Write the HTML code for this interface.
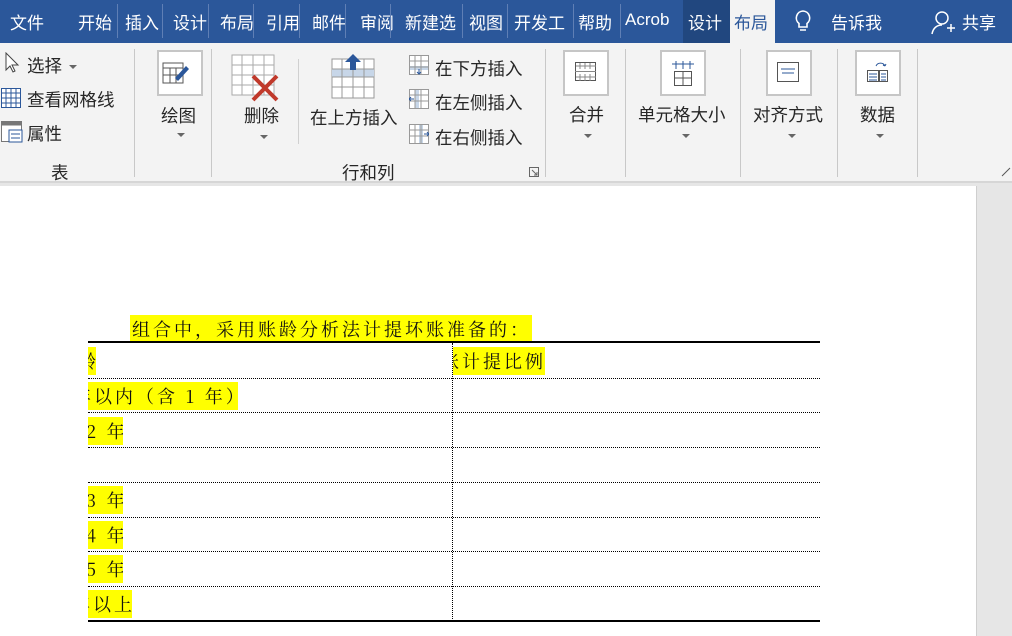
<!DOCTYPE html>
<html><head><meta charset="utf-8"><style>
*{margin:0;padding:0;box-sizing:border-box}
html,body{width:1012px;height:636px;overflow:hidden}
body{position:relative;background:#e6e6e6;font-family:"Liberation Sans","Noto Sans CJK SC",sans-serif}
.a{position:absolute;white-space:nowrap}
#tabs{position:absolute;left:0;top:0;width:1012px;height:43px;background:#2b579a}
.t{position:absolute;top:9px;color:#fff;font-size:17px;white-space:nowrap}
.sep{position:absolute;top:4px;width:1px;height:34px;background:#5f7fb5}
#rib{position:absolute;left:0;top:43px;width:1012px;height:140px;background:#f3f3f3;border-bottom:2px solid #d6d6d6}
.r{position:absolute;font-size:17.5px;color:#262626;white-space:nowrap}
.vs{position:absolute;top:6px;width:1px;height:128px;background:#c8c8c8}
.bx{position:absolute;top:7px;width:46px;height:46px;border:2px solid #c6c6c6;background:#fff}
.dd{position:absolute;width:0;height:0;border-left:4px solid transparent;border-right:4px solid transparent;border-top:4px solid #666}
#page{position:absolute;left:0;top:186px;width:977px;height:450px;background:#fff;border-right:1px solid #cfcfcf;overflow:hidden}
.doc{font-family:"Noto Serif CJK SC","Noto Sans CJK SC",serif;font-size:18px;color:#111}
.hl{background:#ffff00;position:absolute;height:28px;line-height:28px;letter-spacing:3px;white-space:nowrap;overflow:hidden}
.hd{position:absolute;left:88px;width:732px;border-top:1px dotted #000}
</style></head><body>
<div id="tabs">
<span class="t" style="left:10px">文件</span>
<span class="t" style="left:78px">开始</span><div class="sep" style="left:117px"></div>
<span class="t" style="left:125px">插入</span><div class="sep" style="left:162px"></div>
<span class="t" style="left:173px">设计</span><div class="sep" style="left:208px"></div>
<span class="t" style="left:220px">布局</span><div class="sep" style="left:253px"></div>
<span class="t" style="left:266px">引用</span><div class="sep" style="left:299px"></div>
<span class="t" style="left:312px">邮件</span><div class="sep" style="left:345px"></div>
<span class="t" style="left:360px">审阅</span><div class="sep" style="left:390px"></div>
<span class="t" style="left:405px">新建选</span><div class="sep" style="left:462px"></div>
<span class="t" style="left:469px">视图</span><div class="sep" style="left:507px"></div>
<span class="t" style="left:514px">开发工</span><div class="sep" style="left:573px"></div>
<span class="t" style="left:578px">帮助</span><div class="sep" style="left:620px"></div>
<span class="t" style="left:625px;top:10px">Acrob</span>
<div class="a" style="left:683px;top:0;width:47px;height:43px;background:#21477f"></div>
<span class="t" style="left:688px">设计</span>
<div class="a" style="left:730px;top:0;width:45px;height:44px;background:#f3f3f3"></div>
<span class="t" style="left:734px;color:#2b579a">布局</span>
<svg class="a" style="left:792px;top:9px" width="22" height="26"><path d="M11 2a7 7 0 0 0-4 12.5V18h8v-3.5A7 7 0 0 0 11 2z M8 21h6" stroke="#fff" stroke-width="1.6" fill="none"/></svg>
<span class="t" style="left:831px">告诉我</span>
<svg class="a" style="left:930px;top:10px" width="26" height="26"><circle cx="12" cy="8" r="6" stroke="#fff" stroke-width="1.5" fill="none"/><path d="M2 24c1-6 5-9 10-9M17 18h8M21 14v8" stroke="#fff" stroke-width="1.5" fill="none"/></svg>
<span class="t" style="left:962px">共享</span>
</div>
<div id="rib">
<svg class="a" style="left:5px;top:9px" width="16" height="22"><path d="M1 1v17l4-4 3 6 2-1-3-6h6z" fill="#fff" stroke="#444"/></svg>
<span class="r" style="left:27px;top:10px">选择</span><div class="dd" style="left:69px;top:22px"></div>
<svg class="a" style="left:1px;top:45px" width="20" height="20"><rect x="0.5" y="0.5" width="19" height="19" fill="#fff" stroke="#2b579a"/><path d="M5 1v19M10 1v19M15 1v19M1 5h19M1 10h19M1 15h19" stroke="#2b579a"/></svg>
<span class="r" style="left:27px;top:44px">查看网格线</span>
<svg class="a" style="left:1px;top:78px" width="22" height="22"><rect x="0.5" y="0.5" width="20" height="20" fill="#fff" stroke="#777"/><rect x="0.5" y="0.5" width="20" height="4" fill="#777"/><rect x="8" y="9" width="13" height="12" fill="#fff" stroke="#2b579a"/><path d="M10 13h9M10 17h9" stroke="#2b579a"/></svg>
<span class="r" style="left:27px;top:78px">属性</span>
<span class="r" style="left:51px;top:117px">表</span>
<div class="vs" style="left:134px"></div>
<div class="bx" style="left:157px"></div>
<svg class="a" style="left:161px;top:16px" width="40" height="34"><rect x="2" y="4" width="20" height="20" fill="#fff" stroke="#555"/><path d="M2 9h20M2 16h20M9 9v15M15 9v15" stroke="#555"/><path d="M14 19l11-12 3 3-11 12z" fill="#2b579a"/></svg>
<span class="r" style="left:161px;top:60px">绘图</span><div class="dd" style="left:177px;top:90px"></div>
<div class="vs" style="left:211px"></div>
<svg class="a" style="left:231px;top:11px" width="48" height="48"><rect x="1" y="1" width="42" height="40" fill="#fff" stroke="#aaa"/><path d="M11 1v40M22 1v40M33 1v40M1 11h42M1 21h42M1 31h42" stroke="#aaa"/><path d="M22 22l24 24M46 22L22 46" stroke="#c0392b" stroke-width="4"/></svg>
<span class="r" style="left:244px;top:60px">删除</span><div class="dd" style="left:260px;top:92px"></div>
<div class="a" style="left:298px;top:16px;width:1px;height:85px;background:#d0d0d0"></div>
<svg class="a" style="left:331px;top:11px" width="45" height="45"><rect x="1" y="5" width="42" height="39" fill="#fff" stroke="#999"/><rect x="1" y="15" width="42" height="8" fill="#c7d6e8"/><path d="M11 5v39M22 5v39M33 5v39M1 15h42M1 23h42M1 33h42" stroke="#999"/><path d="M22 0l-8 8h5v8h6V8h5z" fill="#2b579a"/></svg>
<span class="r" style="left:310px;top:62px">在上方插入</span>
<span class="r" style="left:435px;top:13px">在下方插入</span>
<span class="r" style="left:435px;top:47px">在左侧插入</span>
<span class="r" style="left:435px;top:82px">在右侧插入</span>
<svg class="a" style="left:409px;top:12px" width="20" height="20"><rect x="0.5" y="0.5" width="19" height="19" fill="#fff" stroke="#999"/><rect x="1" y="11" width="18" height="4" fill="#c7d6e8"/><path d="M6 1v19M12 1v19M1 6h19M1 12h19" stroke="#999"/><path d="M10 14v5M8 17l2 2 2-2" stroke="#2b579a" fill="none"/></svg>
<svg class="a" style="left:409px;top:46px" width="20" height="20"><rect x="0.5" y="0.5" width="19" height="19" fill="#fff" stroke="#999"/><rect x="6" y="1" width="4" height="18" fill="#c7d6e8"/><path d="M6 1v19M12 1v19M1 6h19M1 12h19" stroke="#999"/><path d="M5 10H0M2 8l-2 2 2 2" stroke="#2b579a" fill="none"/></svg>
<svg class="a" style="left:409px;top:81px" width="20" height="20"><rect x="0.5" y="0.5" width="19" height="19" fill="#fff" stroke="#999"/><rect x="10" y="1" width="4" height="18" fill="#c7d6e8"/><path d="M6 1v19M12 1v19M1 6h19M1 12h19" stroke="#999"/><path d="M15 10h5M18 8l2 2-2 2" stroke="#2b579a" fill="none"/></svg>
<span class="r" style="left:342px;top:117px">行和列</span>
<svg class="a" style="left:529px;top:124px" width="10" height="10"><path d="M0.5 0.5h9v9h-9z M3 3l5 5M8 5v3H5" stroke="#666" fill="none"/></svg>
<div class="vs" style="left:545px"></div>
<div class="bx" style="left:563px"></div>
<svg class="a" style="left:575px;top:19px" width="22" height="20"><rect x="0.5" y="0.5" width="20" height="18" fill="none" stroke="#555"/><path d="M0 9.5h21M5 1v6M10 1v6M15 1v6M5 12v7M10 12v7M15 12v7M1 4h20M1 15h20" stroke="#888"/></svg>
<span class="r" style="left:569px;top:59px">合并</span><div class="dd" style="left:584px;top:91px"></div>
<div class="vs" style="left:625px"></div>
<div class="bx" style="left:660px"></div>
<svg class="a" style="left:671px;top:18px" width="24" height="26"><path d="M1 3h22M5 0v8M12 0v8M19 0v8" stroke="#2b579a"/><rect x="3.5" y="10.5" width="17" height="14" fill="none" stroke="#555"/><path d="M12 11v13M3 17h17" stroke="#555"/></svg>
<span class="r" style="left:638px;top:59px">单元格大小</span><div class="dd" style="left:682px;top:91px"></div>
<div class="vs" style="left:740px"></div>
<div class="bx" style="left:766px"></div>
<svg class="a" style="left:777px;top:19px" width="24" height="22"><rect x="0.5" y="0.5" width="21" height="19" fill="#fff" stroke="#555"/><path d="M4 7h14M5 11h12" stroke="#2b579a"/></svg>
<span class="r" style="left:753px;top:59px">对齐方式</span><div class="dd" style="left:788px;top:91px"></div>
<div class="vs" style="left:837px"></div>
<div class="bx" style="left:855px"></div>
<svg class="a" style="left:866px;top:17px" width="24" height="26"><path d="M10 6a5 5 0 0 1 9 0M19 6l-2-1M19 6l1-2" stroke="#2b579a" fill="none"/><rect x="1.5" y="10.5" width="11" height="11" fill="#fff" stroke="#555"/><rect x="13.5" y="10.5" width="8" height="11" fill="#fff" stroke="#555"/><path d="M3 14h8M3 17h8M3 20h8M15 14h5M15 17h5M15 20h5" stroke="#2b579a"/></svg>
<span class="r" style="left:860px;top:59px">数据</span><div class="dd" style="left:876px;top:91px"></div>
<div class="vs" style="left:917px"></div>
<svg class="a" style="left:1001px;top:124px" width="11" height="10"><path d="M1 9l8-8" stroke="#555"/></svg>
</div>
<div id="page">
<div class="doc">
<div class="hl" style="left:130px;top:129px;width:402px;padding-left:2px;letter-spacing:3px">组合中，采用账龄分析法计提坏账准备的：</div>
<div class="a" style="left:88px;top:155px;width:732px;height:2px;background:#000"></div>
<div class="a" style="left:452px;top:157px;height:278px;border-left:1px dotted #000"></div>
<div class="hd" style="top:192px"></div>
<div class="hd" style="top:226px"></div>
<div class="hd" style="top:261px"></div>
<div class="hd" style="top:296px"></div>
<div class="hd" style="top:331px"></div>
<div class="hd" style="top:365px"></div>
<div class="hd" style="top:400px"></div>
<div class="a" style="left:88px;top:434px;width:732px;height:2px;background:#000"></div>
<div class="hl" style="left:88px;top:161px;width:8px"><span style="margin-left:-10px">龄</span></div>
<div class="hl" style="left:453px;top:161px;width:92px"><span style="margin-left:-12px">账计提比例</span></div>
<div class="hl" style="left:88px;top:196px;width:150px"><span style="margin-left:-15px">年以内（含 1 年）</span></div>
<div class="hl" style="left:88px;top:231px;width:35px"><span style="margin-left:-2px">2 年</span></div>
<div class="hl" style="left:88px;top:300px;width:35px"><span style="margin-left:-2px">3 年</span></div>
<div class="hl" style="left:88px;top:335px;width:35px"><span style="margin-left:-2px">4 年</span></div>
<div class="hl" style="left:88px;top:369px;width:35px"><span style="margin-left:-2px">5 年</span></div>
<div class="hl" style="left:88px;top:404px;width:44px"><span style="margin-left:-16px">年以上</span></div>
</div>
</div>
</body></html>
